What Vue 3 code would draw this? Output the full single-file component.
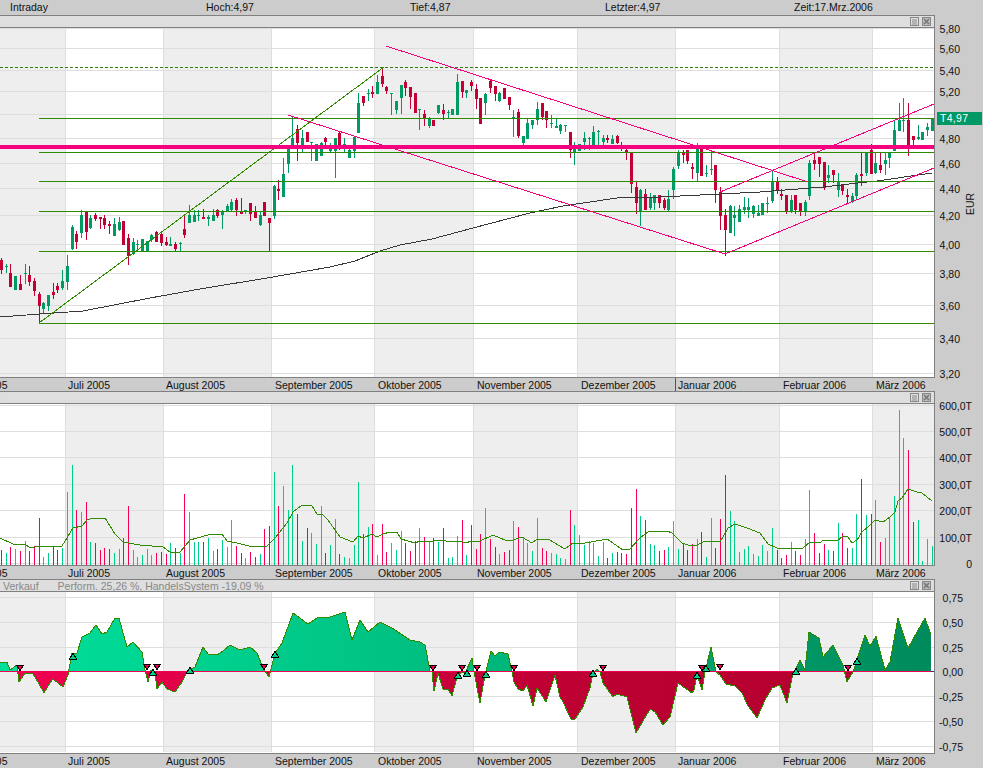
<template>
  <div class="terminal">
    <!-- Kopfzeile -->
    <div class="top-bar">
      <span class="top-a">Intraday</span>
      <span class="top-b">Hoch:4,97</span>
      <span class="top-c">Tief:4,87</span>
      <span class="top-d">Letzter:4,97</span>
      <span>Zeit:17.Mrz.2006</span>
    </div>

    <!-- Kurschart -->
    <div class="strip">
      <span></span>
      <span class="strip-icons">
        <svg width="9" height="9" viewBox="0 0 9 9"><rect x="0.5" y="0.5" width="8" height="8" fill="none" stroke="#888" /><path d="M2 3H7M2 5H7M2 7H7" stroke="#888" /></svg>
        <svg width="9" height="9" viewBox="0 0 9 9"><rect x="0.5" y="0.5" width="8" height="8" fill="#bbb" stroke="#888" /><path d="M2 2L7 7M7 2L2 7" stroke="#777" stroke-width="1.6" /></svg>
      </span>
    </div>
    <div class="panel panel-price">
      <svg class="plot" width="934" height="349" viewBox="0 28 934 349" shape-rendering="crispEdges">
        <rect v-for="b in bandsOdd" :key="b[0]" :x="b[0]" y="29" :width="b[1] - b[0]" height="348" fill="#eeeeee" />
        <rect v-for="x in bandEdges" :key="x" :x="x" y="29" width="1" height="348" fill="#dedede" />
        <rect v-for="t in priceTicks" :key="t.text" x="0" :y="t.y" width="934" height="1" fill="#dedede" />

        <g v-for="c in candles" :key="c.x">
          <rect :x="c.x" :y="c.wt" width="1" :height="c.wb - c.wt" :fill="c.color" />
          <rect :x="c.x - 1" :y="c.bt" width="3" :height="Math.max(c.bb - c.bt, 1)" :fill="c.color" />
        </g>

        <polyline v-for="(m, i) in priceMa" :key="i" :points="m" fill="none" stroke="#383838" />

        <rect v-for="y in levels" :key="y" x="39" :y="y" width="895" height="1" fill="#2f8a00" />
        <line x1="0" y1="67.5" x2="933" y2="67.5" stroke="#2f7a10" stroke-dasharray="3 2" />
        <line x1="39" y1="323" x2="384" y2="67" stroke="#2f8a00" />
        <line v-for="(l, i) in pinkLines" :key="i" :x1="l[0]" :y1="l[1]" :x2="l[2]" :y2="l[3]" stroke="#f5007f" />
        <rect x="0" y="145" width="934" height="4" fill="#f5007f" />
      </svg>
      <div class="axis axis-price">
        <span v-for="t in priceLabels" :key="t.text" class="tick" :style="{ top: t.y - 28 - 5 + 'px' }">{{ t.text }}</span>
        <span class="last-price">T4,97</span>
        <span class="unit">EUR</span>
      </div>
    </div>
    <div class="date-bar">
      <span v-for="m in months" :key="m.text" class="month" :style="{ left: m.x + 'px' }">{{ m.text }}</span>
      <i class="month-tick"></i>
    </div>

    <!-- Umsatz -->
    <div class="strip">
      <span class="strip-text strip-volume">Umsatz</span>
      <span class="strip-icons">
        <svg width="9" height="9" viewBox="0 0 9 9"><rect x="0.5" y="0.5" width="8" height="8" fill="none" stroke="#888" /><path d="M2 3H7M2 5H7M2 7H7" stroke="#888" /></svg>
        <svg width="9" height="9" viewBox="0 0 9 9"><rect x="0.5" y="0.5" width="8" height="8" fill="#bbb" stroke="#888" /><path d="M2 2L7 7M7 2L2 7" stroke="#777" stroke-width="1.6" /></svg>
      </span>
    </div>
    <div class="panel panel-volume">
      <svg class="plot" width="934" height="161" viewBox="0 404 934 161" shape-rendering="crispEdges">
        <rect v-for="b in bandsEven" :key="b[0]" :x="b[0]" y="404" :width="b[1] - b[0]" height="161" fill="#eeeeee" />
        <rect v-for="x in bandEdges" :key="x" :x="x" y="404" width="1" height="161" fill="#dedede" />
        <rect v-for="t in volumeTicks" :key="t.text" x="0" :y="t.y" width="934" height="1" fill="#dedede" />
        <rect v-for="b in volumeBars" :key="b.x" :x="b.x" :y="b.y" width="1" :height="565 - b.y" :fill="b.color" />
        <polyline :points="volumeMa" fill="none" stroke="#2f8a00" />
      </svg>
      <div class="axis axis-volume">
        <span v-for="t in volumeTicks" :key="t.text" class="tick" :style="{ top: t.y - 404 - 5 + 'px' }">{{ t.text }}</span>
      </div>
    </div>
    <div class="date-bar">
      <span v-for="m in months" :key="m.text" class="month" :style="{ left: m.x + 'px' }">{{ m.text }}</span>
    </div>

    <!-- Handelssystem -->
    <div class="strip">
      <span class="strip-text">Verkauf<b class="perform">Perform. 25,26 %, HandelsSystem -19,09 %</b></span>
      <span class="strip-icons">
        <svg width="9" height="9" viewBox="0 0 9 9"><rect x="0.5" y="0.5" width="8" height="8" fill="none" stroke="#888" /><path d="M2 3H7M2 5H7M2 7H7" stroke="#888" /></svg>
        <svg width="9" height="9" viewBox="0 0 9 9"><rect x="0.5" y="0.5" width="8" height="8" fill="#bbb" stroke="#888" /><path d="M2 2L7 7M7 2L2 7" stroke="#777" stroke-width="1.6" /></svg>
      </span>
    </div>
    <div class="panel panel-perf">
      <svg class="plot" width="934" height="161" viewBox="0 592 934 161" shape-rendering="crispEdges">
        <defs>
          <linearGradient id="gainFill" gradientUnits="userSpaceOnUse" x1="0" y1="0" x2="934" y2="0">
            <stop offset="0" stop-color="#00e09c" />
            <stop offset="0.4" stop-color="#00c484" />
            <stop offset="1" stop-color="#008a5c" />
          </linearGradient>
          <linearGradient id="lossFill" gradientUnits="userSpaceOnUse" x1="0" y1="0" x2="934" y2="0">
            <stop offset="0" stop-color="#f20052" />
            <stop offset="0.6" stop-color="#be0033" />
            <stop offset="1" stop-color="#b0002e" />
          </linearGradient>
          <clipPath id="aboveZero"><rect x="0" y="592" width="934" height="79.5" /></clipPath>
          <clipPath id="belowZero"><rect x="0" y="671.5" width="934" height="82" /></clipPath>
        </defs>
        <rect v-for="b in bandsOdd" :key="b[0]" :x="b[0]" y="592" :width="b[1] - b[0]" height="160" fill="#eeeeee" />
        <rect v-for="x in bandEdges" :key="x" :x="x" y="592" width="1" height="160" fill="#dedede" />
        <rect v-for="t in perfTicks" :key="t.text" x="0" :y="t.y" width="934" height="1" fill="#dedede" />
        <polygon :points="perfArea" fill="url(#gainFill)" clip-path="url(#aboveZero)" />
        <polygon :points="perfArea" fill="url(#lossFill)" clip-path="url(#belowZero)" />
        <polyline :points="perfLine" fill="none" stroke="#2f8a00" />
        <rect x="0" y="671" width="931" height="1" fill="#f0004f" />
        <rect x="931" y="671" width="3" height="1" fill="#2030a0" />
        <polygon v-for="(s, i) in signals" :key="i" :points="s.points" :fill="s.fill" stroke="#000" />
      </svg>
      <div class="axis axis-perf">
        <span v-for="t in perfTicks" :key="t.text" class="tick" :style="{ top: t.y - 592 - 5 + 'px' }">{{ t.text }}</span>
      </div>
    </div>
    <div class="date-bar date-bar-last">
      <span v-for="m in months" :key="m.text" class="month" :style="{ left: m.x + 'px' }">{{ m.text }}</span>
    </div>
  </div>
</template>

<script setup>
const UP = '#009a63'
const DOWN = '#c20033'

// Monatsbaender
const edges = [0, 65, 163, 271, 374, 473, 577, 675, 779, 872, 934]
const bandEdges = edges.slice(1, -1)
const bandsOdd = []
const bandsEven = []
edges.slice(0, -1).forEach((x, i) => {
  ;(i % 2 === 0 ? bandsOdd : bandsEven).push([x, edges[i + 1]])
})

const months = [
  { text: 'Juni 2005', x: -38 },
  { text: 'Juli 2005', x: 68 },
  { text: 'August 2005', x: 166 },
  { text: 'September 2005', x: 275 },
  { text: 'Oktober 2005', x: 378 },
  { text: 'November 2005', x: 477 },
  { text: 'Dezember 2005', x: 581 },
  { text: 'Januar 2006', x: 678 },
  { text: 'Februar 2006', x: 783 },
  { text: 'März 2006', x: 876 },
]

// Logarithmische Kursachse
const priceY = (p) => Math.round(373 - 580 * Math.log(p / 3.2))
const priceTicks = [5.8, 5.6, 5.4, 5.2, 5, 4.8, 4.6, 4.4, 4.2, 4, 3.8, 3.6, 3.4, 3.2].map((p) => ({
  text: p.toFixed(2).replace('.', ','),
  y: priceY(p),
}))
// 5,00 liegt hinter dem Kursfeld
const priceLabels = priceTicks.filter((t) => t.text !== '5,00')
const levels = [118, 152, 181, 211, 251, 323]
const pinkLines = [
  [386, 46, 808, 182],
  [288, 115, 725, 254],
  [725, 254, 934, 168],
  [720, 192, 934, 104],
]

// [Docht oben, Koerper oben, Koerper unten, Docht unten, steigend]
const ohlc = [
  [258,260,270,274,0],[264,266,267,273,1],[264,273,287,287,0],[276,276,290,290,1],[275,284,290,290,0],
  [264,273,274,284,1],[266,275,282,286,0],[278,281,291,296,0],[292,294,306,323,0],[302,303,309,313,1],
  [295,295,306,311,1],[283,292,295,299,0],[283,286,290,293,0],[270,281,288,290,1],[255,266,282,290,1],
  [225,227,249,250,1],[231,234,242,249,0],[210,215,233,238,1],[212,212,232,240,0],[215,218,228,229,1],
  [213,215,219,221,0],[217,217,219,229,0],[215,218,225,229,0],[221,224,226,234,0],[218,224,236,236,1],
  [217,222,230,231,1],[221,221,245,245,0],[234,238,256,265,0],[238,242,254,255,1],[240,244,245,251,1],
  [239,239,251,251,1],[241,241,251,251,1],[234,235,240,242,1],[231,232,242,242,0],[232,234,243,246,0],
  [237,242,245,246,0],[237,244,246,246,1],[242,244,249,251,0],[242,243,244,251,1],[216,229,235,238,0],
  [205,215,223,223,1],[210,215,222,222,1],[210,215,216,221,1],[209,217,219,219,0],[215,217,219,226,1],
  [209,215,221,221,1],[209,210,216,218,0],[210,211,215,229,1],[204,206,212,212,1],[199,202,210,211,1],
  [198,200,210,216,0],[198,211,214,214,0],[210,210,211,214,1],[203,203,214,221,0],[206,212,218,218,0],
  [212,215,225,226,1],[202,202,216,216,0],[218,218,223,251,0],[185,186,216,219,1],[180,189,191,200,0],
  [158,174,197,197,1],[145,148,164,173,1],[117,138,145,148,1],[125,129,143,161,0],[130,138,145,152,1],
  [132,132,142,142,0],[142,142,143,161,1],[144,144,161,161,1],[142,143,156,156,1],[137,138,142,145,0],
  [143,148,151,152,1],[138,138,151,178,1],[131,133,145,150,0],[138,144,146,152,1],[148,150,158,158,1],
  [137,137,151,158,1],[93,103,133,133,1],[96,96,103,106,0],[89,93,94,101,1],[86,92,94,98,0],
  [75,82,94,94,1],[67,76,84,87,0],[86,87,91,94,0],[93,93,94,115,1],[101,101,110,114,1],
  [85,85,98,114,1],[80,82,88,96,0],[87,87,97,109,0],[93,93,113,113,0],[109,109,110,130,1],
  [110,114,118,126,0],[117,118,126,128,1],[120,120,126,126,0],[105,105,113,114,1],[104,110,114,120,0],
  [110,112,113,118,1],[109,109,115,115,1],[74,82,115,115,1],[81,81,92,98,0],[90,90,93,98,1],
  [80,82,86,91,0],[84,89,99,109,0],[98,98,124,124,0],[93,94,103,115,1],[80,81,88,93,0],
  [86,86,94,101,0],[92,93,101,102,1],[88,88,99,99,0],[97,97,105,110,0],[110,117,118,137,1],
  [109,112,136,138,0],[136,136,143,148,1],[119,123,139,139,1],[120,120,125,129,1],[102,109,120,125,1],
  [103,103,117,120,0],[111,111,120,128,0],[115,123,124,128,1],[118,126,128,128,1],[124,125,131,134,1],
  [125,125,126,132,1],[132,132,150,158,0],[142,149,153,165,1],[144,144,151,151,1],[132,138,142,150,1],
  [137,138,139,150,1],[126,132,145,145,1],[130,131,132,145,1],[135,138,142,148,1],[135,138,140,143,0],
  [135,139,144,144,1],[135,136,143,144,0],[142,148,149,151,0],[147,150,152,160,0],[153,153,184,193,0],
  [182,187,203,214,0],[189,190,211,226,1],[189,194,210,210,0],[193,198,208,210,1],[195,195,203,210,1],
  [195,195,203,208,0],[198,200,208,210,0],[190,199,210,212,1],[167,169,190,199,1],[150,152,166,169,1],
  [150,152,155,163,0],[150,150,161,164,0],[163,167,169,179,0],[143,145,173,182,1],[147,147,176,176,0],
  [165,173,174,177,1],[150,169,170,175,1],[165,165,190,203,0],[187,192,216,230,0],[209,215,230,256,0],
  [205,206,233,233,1],[206,215,218,236,1],[205,209,222,222,1],[197,207,210,214,1],[198,207,210,218,1],
  [205,206,214,218,1],[205,213,216,216,1],[203,203,215,215,1],[197,203,204,213,1],[170,182,201,203,1],
  [177,182,191,194,0],[189,194,196,200,0],[195,195,212,214,0],[195,200,212,213,1],[195,195,210,214,0],
  [203,203,212,216,0],[200,202,211,216,1],[160,163,196,200,1],[152,160,164,170,0],[157,157,164,177,0],
  [162,162,188,190,0],[165,175,178,183,1],[170,170,175,183,0],[173,182,190,197,1],[185,185,191,195,0],
  [189,195,197,203,0],[193,196,201,203,1],[173,175,196,200,1],[153,174,176,186,0],[152,152,173,176,1],
  [144,150,174,174,0],[153,163,173,174,1],[153,165,170,173,0],[153,160,164,175,1],[153,153,158,168,1],
  [120,130,151,151,1],[103,120,131,131,1],[98,120,121,132,1],[103,120,145,156,0],[136,136,140,145,0],
  [125,137,139,140,1],[132,132,140,140,1],[123,127,130,136,1],[118,118,131,131,1],
]
const candleX = (i) => Math.round(1 + i * 4.7)
const candles = ohlc.map((c, i) => ({
  x: candleX(i),
  wt: c[0],
  bt: c[1],
  bb: c[2],
  wb: c[3],
  color: c[4] ? UP : DOWN,
}))

const priceMa = [
  '0,317 40,314 83,311 150,298 200,289 267,278 330,267 355,261 380,251 400,245 432,239 473,228 530,213 563,206 617,198 660,197 760,192 823,187 867,182',
  '877,181 932,173',
]

// Umsatz
const volumeTicks = [
  { text: '600,0T', y: 405 },
  { text: '500,0T', y: 431 },
  { text: '400,0T', y: 457 },
  { text: '300,0T', y: 484 },
  { text: '200,0T', y: 510 },
  { text: '100,0T', y: 537 },
  { text: '0', y: 563 },
]
const volumeTops = [
  550,553,547,549,551,541,551,546,518,557,553,547,550,548,492,465,510,512,502,542,
  543,550,548,549,553,549,538,506,550,557,555,549,555,553,552,554,543,548,553,494,
  512,542,542,542,538,551,549,540,547,520,546,553,558,552,557,554,529,526,472,506,
  486,510,465,514,541,528,533,544,506,553,545,519,554,557,558,545,482,534,527,524,
  555,524,552,543,550,531,543,551,541,528,537,541,538,542,528,558,557,536,520,555,
  525,549,534,508,539,547,554,552,550,521,527,538,543,551,518,548,551,553,554,558,
  559,510,525,535,545,541,543,556,542,558,553,552,553,554,508,489,516,520,544,545,
  551,550,547,521,549,544,550,544,539,532,557,518,548,519,475,511,521,552,549,546,
  554,556,545,551,528,550,558,555,542,551,555,539,490,533,553,544,550,551,523,533,
  548,548,514,479,515,514,500,542,538,517,496,410,438,450,522,520,561,539,546,
]
const volumeBars = volumeTops.map((y, i) => ({ x: candleX(i), y, color: ohlc[i][4] ? '#00cf8a' : '#f70050' }))
const volumeMa = '0,538 13,544 25,544 30,548 40,546 62,546 73,528 82,526 87,520 93,518 105,518 115,534 123,542 140,545 163,547 170,552 180,552 190,540 208,535 222,534 227,541 237,543 253,547 267,546 275,538 287,523 293,512 302,505 312,506 317,514 322,514 328,520 335,530 340,537 353,542 358,536 363,538 372,534 377,537 383,534 390,532 397,532 401,539 415,543 420,541 425,542 443,540 446,541 460,541 466,543 471,541 480,541 493,535 505,540 513,540 522,537 532,543 537,539 548,539 565,549 573,543 580,544 607,539 623,550 630,549 640,538 648,532 667,531 672,533 682,543 688,545 697,545 703,542 708,541 720,542 728,528 735,524 747,528 760,533 768,544 777,548 787,549 803,548 810,542 820,543 823,540 837,541 843,536 848,537 852,543 857,540 862,532 870,525 875,520 883,522 890,517 895,512 898,501 902,498 908,489 917,492 922,493 932,501'

// Performance
const perfTicks = [
  { text: '0,75', y: 597 },
  { text: '0,50', y: 622 },
  { text: '0,25', y: 647 },
  { text: '0,00', y: 671 },
  { text: '-0,25', y: 696 },
  { text: '-0,50', y: 721 },
  { text: '-0,75', y: 746 },
]
const perfLine = '0,663 7,662 10,670 17,665 19,682 25,673 33,674 38,682 44,693 50,683 53,679 63,687 68,675 72,653 77,653 82,637 90,633 96,625 102,634 107,632 115,618 119,618 127,647 133,642 142,652 145,670 148,682 151,670 155,673 157,689 162,682 167,689 175,692 182,682 188,670 195,667 203,647 208,654 217,655 223,651 230,645 240,650 250,647 257,653 263,668 269,677 275,653 282,643 293,613 308,624 317,618 330,617 345,612 352,640 360,620 368,632 380,622 392,628 410,640 420,642 425,645 430,671 432,672 434,691 438,673 443,689 448,689 452,696 457,677 462,672 465,673 472,658 474,672 480,703 485,675 491,651 495,656 499,652 508,654 512,672 514,682 518,689 523,691 527,685 533,706 537,688 546,702 555,675 560,697 563,702 571,719 575,719 583,707 590,688 593,673 597,669 600,672 603,683 613,697 617,694 627,697 636,733 650,709 655,712 663,725 670,717 678,683 692,693 694,690 697,675 702,690 705,672 711,647 716,672 720,675 726,684 735,686 742,693 748,706 757,718 765,700 772,688 780,685 787,703 792,678 795,670 800,660 805,670 809,632 819,638 823,657 833,645 843,665 847,682 853,672 865,635 870,646 876,636 885,670 890,662 898,618 908,648 925,618 931,635'
const perfArea = `0,671 ${perfLine} 931,671`

// Kauf- und Verkaufssignale
const signalPoints = [
  [20, 668, 0], [73, 656, 1], [147, 667, 0], [153, 672, 1], [157, 667, 0], [190, 670, 1], [264, 667, 0], [275, 654, 1],
  [433, 668, 0], [458, 675, 1], [462, 668, 0], [467, 673, 1], [477, 668, 0], [486, 674, 1], [514, 668, 0], [593, 673, 1],
  [603, 668, 0], [697, 675, 1], [702, 668, 0], [706, 668, 1], [720, 667, 0], [796, 671, 1], [848, 668, 0], [857, 661, 1],
]
const signals = signalPoints.map(([x, y, up]) => ({
  points: up
    ? `${x},${y - 3} ${x + 3.5},${y + 3} ${x - 3.5},${y + 3}`
    : `${x - 3.5},${y - 3} ${x + 3.5},${y - 3} ${x},${y + 3}`,
  fill: up ? '#00d08c' : '#f00050',
}))
</script>

<style scoped>
.terminal {
  width: 983px;
  height: 768px;
  background: #cccccc;
  overflow: hidden;
  display: flex;
  flex-direction: column;
  font-family: "Liberation Sans", Arial, sans-serif;
  font-size: 10.5px;
  color: #111;
}

.top-bar {
  height: 15px;
  line-height: 14px;
  display: flex;
  padding-left: 10px;
  flex: none;
}
.top-a { width: 196px; }
.top-b { width: 204px; }
.top-c { width: 195px; }
.top-d { width: 189px; }

.strip {
  flex: none;
  box-sizing: border-box;
  width: 935px;
  height: 13px;
  background: #dedede;
  border-top: 1px solid #808080;
  border-bottom: 1px solid #808080;
  border-right: 1px solid #808080;
  display: flex;
  justify-content: space-between;
  align-items: center;
  padding-right: 3px;
  overflow: hidden;
}

.strip-icons {
  display: flex;
  gap: 3px;
}
.strip-icons svg { display: block; }

.strip-text {
  color: #888;
  padding-left: 3px;
  white-space: nowrap;
}
.strip-volume {
  padding-left: 0;
  margin-left: -35px;
}
.perform {
  font-weight: normal;
  margin-left: 19px;
}

.panel {
  flex: none;
  display: flex;
}
.panel-price { height: 349px; }
.panel-volume { height: 161px; }
.panel-perf { height: 161px; }

.plot {
  display: block;
  flex: none;
  background: #fff;
  border-right: 1px solid #808080;
}

.axis {
  position: relative;
  flex: 1;
}
.tick {
  position: absolute;
  line-height: 12px;
  white-space: nowrap;
}
.axis-price .tick { right: 23px; }
.axis-volume .tick { right: 11px; }
.axis-perf .tick { right: 20px; }

.last-price {
  position: absolute;
  left: 2px;
  top: 84px;
  width: 42px;
  height: 13px;
  padding-left: 3px;
  line-height: 13px;
  background: #009966;
  color: #fff;
  letter-spacing: 0.3px;
}
.unit {
  position: absolute;
  left: 24px;
  top: 170px;
  line-height: 12px;
  transform: rotate(-90deg);
}

.date-bar {
  flex: none;
  box-sizing: border-box;
  position: relative;
  width: 935px;
  height: 14px;
  border-top: 1px solid #808080;
  overflow: hidden;
}
.date-bar-last { height: 15px; }
.month {
  position: absolute;
  top: 1px;
  line-height: 13px;
  white-space: nowrap;
}
.month-tick {
  position: absolute;
  left: 675px;
  top: 0;
  width: 1px;
  height: 13px;
  background: #555;
}
</style>

<style>
html, body {
  margin: 0;
  background: #cccccc;
}
</style>
